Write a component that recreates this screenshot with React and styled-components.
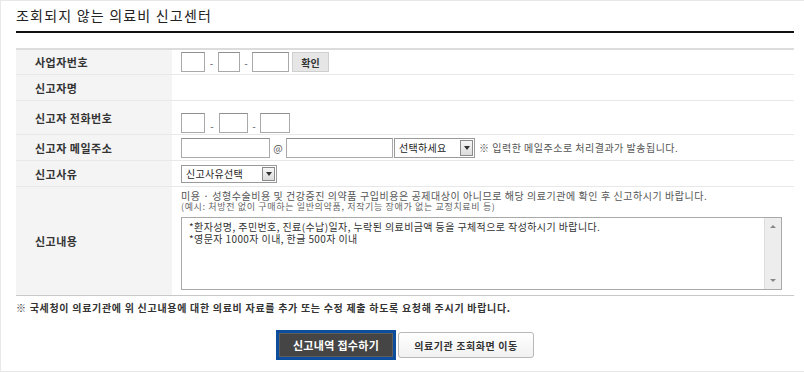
import React from 'react';
import styled, { createGlobalStyle } from 'styled-components';

const GlobalStyle = createGlobalStyle`
  html, body {
    margin: 0;
    padding: 0;
    background: #fff;
  }
  body {
    font-family: "Noto Sans CJK KR", "Noto Sans", sans-serif;
    color: #333;
  }
  * {
    box-sizing: border-box;
  }
`;

const Page = styled.div`
  width: 804px;
  height: 372px;
  border: 1px solid #e8e8e8;
  border-right: none;
  padding: 0 10px 0 15px;
`;

const Title = styled.h1`
  margin: 0 0 15px;
  padding: 5px 0 7px;
  font-size: 14px;
  line-height: 18px;
  letter-spacing: 1.2px;
  font-weight: normal;
  color: #222;
  border-bottom: 2px solid #111;
`;

const Form = styled.div`
  border-top: 2px solid #dcdcdc;
  border-bottom: 1px solid #c8c8c8;
`;

const Row = styled.div`
  display: flex;
  height: ${p => p.h}px;
  border-bottom: ${p => (p.last ? 'none' : '1px solid #e8e8e8')};
`;

const Label = styled.div`
  width: 156px;
  flex: none;
  display: flex;
  align-items: center;
  padding-left: 19px;
  background: #f4f4f4;
  font-size: 11px;
  font-weight: bold;
  letter-spacing: 0.5px;
  color: #333;
`;

const Value = styled.div`
  flex: 1;
  display: flex;
  align-items: ${p => p.align || 'center'};
  padding: ${p => p.pad || '0 0 0 9px'};
  font-size: 10px;
`;

const Column = styled.div`
  flex: 1;
  display: flex;
  flex-direction: column;
`;

const TextInput = styled.input`
  width: ${p => p.w}px;
  height: 20px;
  margin: 0;
  padding: 0 3px;
  border: 1px solid #a9a9a9;
  border-top-color: #8f8f8f;
  background: #fff;
  font: inherit;
  outline: none;
`;

const Dash = styled.span`
  width: ${p => p.w || 13}px;
  text-align: center;
  color: #555;
  font-size: 10px;
`;

const CheckButton = styled.button`
  width: 37px;
  height: 20px;
  margin-left: 3px;
  padding: 0;
  border: 1px solid #cfcfcf;
  background: #e6e6e6;
  font-family: inherit;
  font-size: 10px;
  font-weight: bold;
  color: #333;
`;

const Select = styled.div`
  width: ${p => p.w}px;
  height: ${p => p.h || 20}px;
  margin-left: ${p => p.ml || 0}px;
  display: flex;
  align-items: center;
  justify-content: space-between;
  padding: 1px 1px 1px 4px;
  border: 1px solid #9a9a9a;
  background: #fff;
  font-size: 10px;
  letter-spacing: 0.3px;
  color: #222;
`;

const Arrow = styled.span`
  width: 13px;
  height: 100%;
  display: flex;
  align-items: center;
  justify-content: center;
  border: 1px solid #8a8a8a;
  background: linear-gradient(#f6f6f6, #dcdcdc);

  &::after {
    content: '';
    border-top: 4px solid #333;
    border-left: 3px solid transparent;
    border-right: 3px solid transparent;
  }
`;

const Note = styled.span`
  margin-left: 4px;
  font-size: 10px;
  letter-spacing: 0.5px;
  color: #555;
`;

const Guide = styled.p`
  margin: 0;
  font-size: ${p => p.size}px;
  line-height: ${p => p.lh}px;
  letter-spacing: ${p => p.ls}px;
  color: ${p => p.color};
  white-space: nowrap;
`;

const TextBox = styled.div`
  width: 601px;
  height: 73px;
  margin-top: 5px;
  display: flex;
  border: 1px solid #a9a9a9;
  background: #fff;
`;

const TextBody = styled.div`
  flex: 1;
  padding: 3px 7px;
  font-size: 10px;
  line-height: 12px;
  letter-spacing: 0.4px;
  color: #333;
`;

const Scrollbar = styled.div`
  width: 17px;
  display: flex;
  flex-direction: column;
  justify-content: space-between;
  align-items: center;
  padding: 7px 0;
  background: #ededed;
  border-left: 1px solid #dcdcdc;
`;

const ScrollArrow = styled.span`
  width: 0;
  height: 0;
  border-left: 3px solid transparent;
  border-right: 3px solid transparent;
  ${p => (p.up ? 'border-bottom: 3px solid #888;' : 'border-top: 3px solid #888;')}
`;

const FooterNote = styled.p`
  margin: 5px 0 0;
  font-size: 10px;
  line-height: 14px;
  font-weight: bold;
  letter-spacing: 0.7px;
  color: #333;
`;

const Buttons = styled.div`
  display: flex;
  justify-content: center;
  align-items: center;
  gap: 2px;
  margin-top: 15px;
`;

const PrimaryButton = styled.button`
  width: 120px;
  height: 30px;
  padding: 0;
  border: 3px solid #0c4e9c;
  background: #454545;
  box-shadow: inset 0 0 0 1px #5e5e5e;
  font-family: inherit;
  font-size: 11px;
  font-weight: bold;
  letter-spacing: 0.3px;
  color: #fff;
`;

const SecondaryButton = styled.button`
  width: 136px;
  height: 26px;
  padding: 0;
  border: 1px solid #b8b8b8;
  border-radius: 3px;
  background: linear-gradient(#fff, #f1f1f1);
  font-family: inherit;
  font-size: 10px;
  font-weight: bold;
  letter-spacing: 0.6px;
  color: #333;
`;

export default function App() {
  return (
    <Page>
      <GlobalStyle />
      <Title>조회되지 않는 의료비 신고센터</Title>
      <Form>
        <Row h={25}>
          <Label>사업자번호</Label>
          <Value>
            <TextInput w={24} />
            <Dash>-</Dash>
            <TextInput w={22} />
            <Dash w={12}>-</Dash>
            <TextInput w={37} />
            <CheckButton>확인</CheckButton>
          </Value>
        </Row>
        <Row h={26}>
          <Label>신고자명</Label>
          <Value />
        </Row>
        <Row h={34}>
          <Label>신고자 전화번호</Label>
          <Value align="flex-end" pad="0 0 1px 9px">
            <TextInput w={24} />
            <Dash w={14}>-</Dash>
            <TextInput w={29} />
            <Dash w={12}>-</Dash>
            <TextInput w={30} />
          </Value>
        </Row>
        <Row h={26}>
          <Label>신고자 메일주소</Label>
          <Value>
            <TextInput w={89} />
            <Dash w={16}>@</Dash>
            <TextInput w={107} />
            <Select w={81} ml={1}>
              선택하세요
              <Arrow />
            </Select>
            <Note>※ 입력한 메일주소로 처리결과가 발송됩니다.</Note>
          </Value>
        </Row>
        <Row h={26}>
          <Label>신고사유</Label>
          <Value>
            <Select w={96} h={18}>
              신고사유선택
              <Arrow />
            </Select>
          </Value>
        </Row>
        <Row h={108} last>
          <Label>신고내용</Label>
          <Value align="flex-start" pad="3px 0 0 9px">
            <Column>
              <Guide size={10} lh={11} ls={0.55} color="#555">
                미용 · 성형수술비용 및 건강증진 의약품 구입비용은 공제대상이 아니므로 해당 의료기관에 확인 후 신고하시기 바랍니다.
              </Guide>
              <Guide size={9} lh={11} ls={0.65} color="#666">
                (예시: 처방전 없이 구매하는 일반의약품, 저작기능 장애가 없는 교정치료비 등)
              </Guide>
              <TextBox>
                <TextBody>
                  *환자성명, 주민번호, 진료(수납)일자, 누락된 의료비금액 등을 구체적으로 작성하시기 바랍니다.
                  <br />
                  *영문자 1000자 이내, 한글 500자 이내
                </TextBody>
                <Scrollbar>
                  <ScrollArrow up />
                  <ScrollArrow />
                </Scrollbar>
              </TextBox>
            </Column>
          </Value>
        </Row>
      </Form>
      <FooterNote>
        ※ 국세청이 의료기관에 위 신고내용에 대한 의료비 자료를 추가 또는 수정 제출 하도록 요청해 주시기 바랍니다.
      </FooterNote>
      <Buttons>
        <PrimaryButton>신고내역 접수하기</PrimaryButton>
        <SecondaryButton>의료기관 조회화면 이동</SecondaryButton>
      </Buttons>
    </Page>
  );
}
